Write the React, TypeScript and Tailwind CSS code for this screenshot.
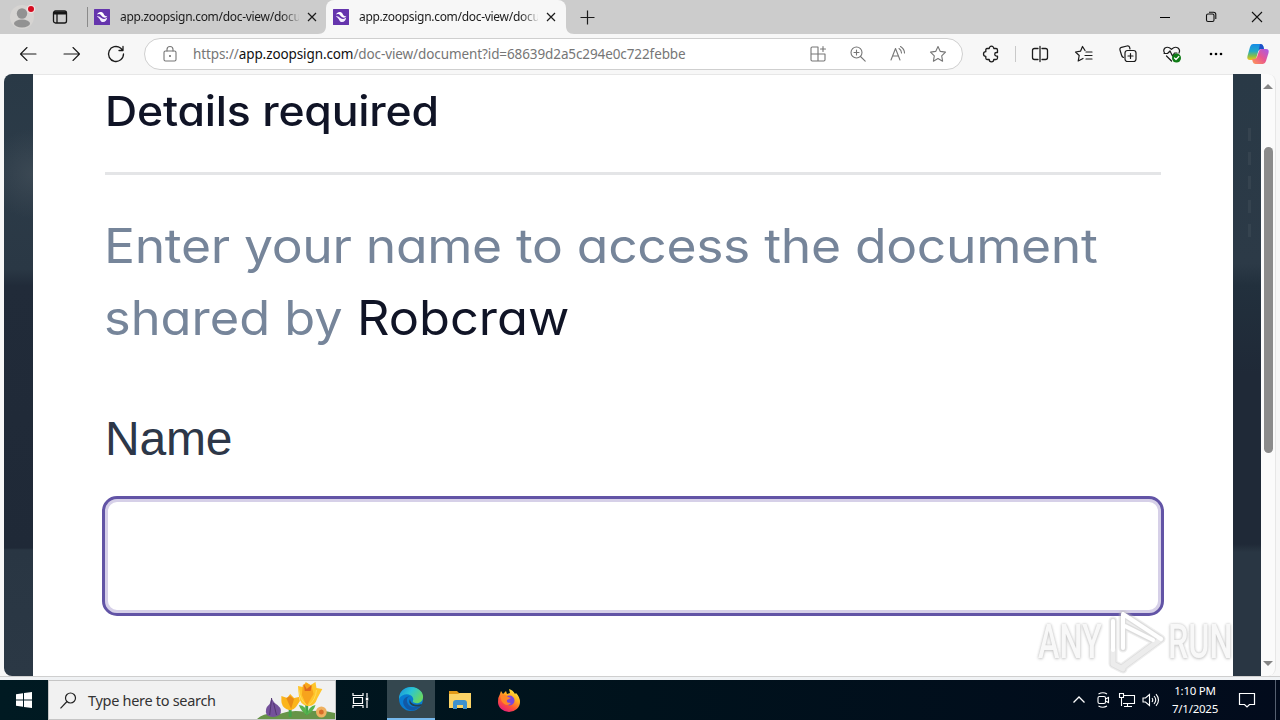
import type { ReactNode } from 'react';

const IconButton = ({ children }: { children: ReactNode }) => (
  <button type="button" className="flex h-8 w-11 shrink-0 items-center justify-center text-[#1b1b1b]">
    {children}
  </button>
);

const Icon = ({ children, size = 20, width = 1.1 }: { children: ReactNode; size?: number; width?: number }) => (
  <svg width={size} height={size} viewBox="0 0 20 20" fill="none" stroke="currentColor" strokeWidth={width} strokeLinecap="round" strokeLinejoin="round" className="shrink-0">
    {children}
  </svg>
);

const Favicon = () => (
  <svg width="16" height="16" viewBox="0 0 16 16" className="shrink-0">
    <rect width="16" height="16" rx="0.5" fill="#6535ad" />
    <path d="M3 5.500C4 3.200 6 2.500 8 3.200c2 .8 1.500 2.600 3 3.600.9.6 1.700.6 2.300.5-.6 1.300-2.300 1.700-4 1C7.300 7.500 7.500 6 6 5.300 5 4.800 4 5 3 5.500Z" fill="#fff" />
    <path d="M2.800 7.500c1.200-.3 2.300-.2 3.200.6 1.400 1.200 2.500 2 4.200 1.800 1.300-.1 2.400-.6 3-1.300-.2 2.800-2 4.600-4.300 4.500-2.400-.1-2.400-2.400-3.700-3.700-.8-.9-1.500-1.500-2.400-1.900Z" fill="#f3edff" />
  </svg>
);

const CloseIcon = () => (
  <svg width="10" height="10" viewBox="0 0 10 10" stroke="#1b1b1b" strokeWidth="1.2" className="shrink-0">
    <path d="M1 1l8 8M9 1L1 9" />
  </svg>
);

const Tab = ({ active = false }: { active?: boolean }) => (
  <div className={active ? 'relative flex h-[34px] w-[240px] items-center rounded-t-lg bg-[#f7f7f7] pl-[7px]' : 'flex h-[34px] w-[238px] items-center pl-[6px]'}>
    <Favicon />
    <span className="ml-[10px] w-[179px] overflow-hidden whitespace-nowrap text-[12px] tracking-[-0.3px] text-[#1b1b1b] [mask-image:linear-gradient(to_right,#000_90%,transparent_102%)]">
      app.zoopsign.com/doc-view/docu
    </span>
    <span className="ml-[8px] flex"><CloseIcon /></span>
    {active && (
      <>
        <svg width="8" height="8" className="absolute bottom-0 -left-2" fill="#f7f7f7"><path d="M8 0v8H0c5 0 8-3 8-8Z" /></svg>
        <svg width="8" height="8" className="absolute -right-2 bottom-0" fill="#f7f7f7"><path d="M0 0v8h8C3 8 0 5 0 0Z" /></svg>
      </>
    )}
  </div>
);

const TitleBar = () => (
  <div className="flex h-[34px] items-center bg-[#cccccc]">
    <svg width="28" height="28" viewBox="0 0 28 28" className="ml-2 shrink-0">
      <circle cx="14" cy="14" r="12" fill="#d6d4d2" />
      <circle cx="14" cy="10.500" r="5.200" fill="#929292" />
      <ellipse cx="14" cy="20.500" rx="8" ry="4" fill="#929292" />
      <circle cx="23" cy="6" r="4.300" fill="#f2dede" />
      <circle cx="23" cy="6" r="3" fill="#d50b20" />
    </svg>
    <svg width="16" height="16" viewBox="0 0 16 16" fill="none" stroke="#161616" strokeWidth="1.300" className="ml-4 shrink-0">
      <rect x="1.500" y="2" width="13" height="12" rx="2" />
      <path d="M2 4h12" strokeWidth="3" />
      <path d="M5 5v9" />
    </svg>
    <div className="ml-[19px] h-5 w-px bg-[#8a8a8a]" />
    <Tab />
    <Tab active />
    <svg width="15" height="15" viewBox="0 0 15 15" stroke="#1b1b1b" strokeWidth="1.200" className="ml-[14px]">
      <path d="M7.500.5v14M.5 7.500h14" />
    </svg>
    <div className="ml-auto flex items-center">
      <div className="flex w-[46px] justify-center"><div className="h-px w-[10px] bg-black" /></div>
      <div className="flex w-[46px] justify-center">
        <svg width="12" height="12" viewBox="0 0 12 12" fill="none" stroke="#111" strokeWidth="1.100">
          <rect x="1.500" y="3" width="7.500" height="7.500" rx="1.500" />
          <path d="M4 1.200h4.500q2.300 0 2.300 2.300V8" />
        </svg>
      </div>
      <div className="flex w-[46px] justify-center">
        <svg width="12" height="12" viewBox="0 0 12 12" stroke="#111" strokeWidth="1.100"><path d="M1 1l10 10M11 1L1 11" /></svg>
      </div>
    </div>
  </div>
);

const AddressBar = () => (
  <div className="ml-[6px] flex h-8 w-[819px] shrink-0 items-center rounded-full border border-[#cfcfcf] bg-white pr-1 pl-[15px] text-[#767676]">
    <Icon>
      <rect x="4" y="7" width="12" height="10" rx="1.500" />
      <path d="M7 7V5.500a3 3 0 0 1 6 0V7" />
      <circle cx="10" cy="12" r=".5" fill="currentColor" />
    </Icon>
    <span className="ml-[13px] text-[13.500px] whitespace-nowrap tracking-[-0.1px]">
      https://<span className="text-[#111]">app.zoopsign.com</span>/doc-view/document?id=68639d2a5c294e0c722febbe
    </span>
    <div className="ml-auto flex">
      <span className="flex w-10 justify-center">
        <Icon><path d="M10 3H4.200Q3 3 3 4.200v11.600Q3 17 4.200 17h11.600q1.200 0 1.200-1.200V10H3M10 3v14M15 2.500v5M12.500 5h5" /></Icon>
      </span>
      <span className="flex w-10 justify-center">
        <Icon><circle cx="8.500" cy="8.500" r="5.500" /><path d="M12.500 12.500l4.700 4.700M6 8.500h5M8.500 6v5" /></Icon>
      </span>
      <span className="flex w-10 justify-center">
        <Icon><path d="M3 16L7.500 4.500 12 16M4.500 12h6M11 4.500q2.500 1.500 2.500 4.500M12.500 2.500q4 2.500 4 6.500" /></Icon>
      </span>
      <span className="flex w-10 justify-center">
        <Icon><path d="M10 2.500l2.300 4.900 5.200.7-3.800 3.700.9 5.400-4.600-2.600-4.600 2.600.9-5.400-3.800-3.700 5.200-.7Z" /></Icon>
      </span>
    </div>
  </div>
);

const Toolbar = () => (
  <div className="flex h-10 items-center bg-[#f7f7f7] pl-[6px]">
    <IconButton><Icon><path d="M18 10H2.500M9 3.500L2.500 10 9 16.500" /></Icon></IconButton>
    <IconButton><Icon><path d="M2 10h15.500M11 3.500l6.500 6.500-6.500 6.500" /></Icon></IconButton>
    <IconButton><Icon width={1.300}><path d="M17.500 10A7.500 7.500 0 1 1 14.500 4l2 2M17 2.500V6.500h-4" /></Icon></IconButton>
    <AddressBar />
    <div className="ml-[6px]">
      <IconButton>
        <Icon width={1.300}>
          <path d="M6 4.500h2.200a2.300 2.300 0 0 1 4.600 0H15q1.500 0 1.500 1.500v2.500H15.500a1.800 1.800 0 0 0 0 3.600h1V14q0 1.500-1.500 1.500h-2.200a2.300 2.300 0 0 1-4.600 0H6q-1.200 0-1.200-1.500v-1.700a2.300 2.300 0 0 1 0-4.600V6Q4.800 4.500 6 4.500Z" />
        </Icon>
      </IconButton>
    </div>
    <div className="mx-[2px] h-4 w-px shrink-0 bg-[#c9c9c9]" />
    <IconButton>
      <Icon width={1.300}><path d="M8 4.500H4.500q-2 0-2 2v7q0 2 2 2H8M12 4.500h3.500q2 0 2 2v7q0 2-2 2H12M10 2.500v15" /></Icon>
    </IconButton>
    <IconButton>
      <Icon width={1.200}><path d="M11 6.500L8.500 2.500 6.500 7.200 1.500 8l3.700 3.500-1 5.500L9 14.500M12 8h6M11 11.500h7M12 15h6" /></Icon>
    </IconButton>
    <IconButton>
      <Icon width={1.200}>
        <path d="M5.500 13.500Q4 13 3.500 11L2 6q-.5-2 1.500-2.700L9 2q2-.4 2.600 1.300L12 5" />
        <rect x="7" y="6.500" width="11" height="11" rx="2.500" />
        <path d="M12.500 9.500v5M10 12h5" />
      </Icon>
    </IconButton>
    <IconButton>
      <Icon width={1.200}>
        <path d="M2.500 9Q.8 6 3 4q3-2 6.500 1.300Q13 2 16 4q2.500 2 1 5M4.500 12l5 5M2 9.500h3.500L8 7l2.500 5L12.500 9H15" />
        <circle cx="14.500" cy="14" r="4.500" fill="#0f7b16" stroke="none" />
        <path d="M12.500 14l1.500 1.500 2.800-3" stroke="#fff" />
      </Icon>
    </IconButton>
    <IconButton>
      <svg width="16" height="4" viewBox="0 0 16 4"><circle cx="3" cy="2" r="1.300" /><circle cx="8" cy="2" r="1.300" /><circle cx="13" cy="2" r="1.300" /></svg>
    </IconButton>
    <svg width="24" height="24" viewBox="0 0 24 24" className="ml-[8px] shrink-0">
      <defs>
        <linearGradient id="cpa" x1="0" y1="0" x2="0" y2="1">
          <stop offset="0" stopColor="#168ce8" />
          <stop offset=".45" stopColor="#22a9c8" />
          <stop offset=".75" stopColor="#86bf4a" />
          <stop offset="1" stopColor="#f3c51d" />
        </linearGradient>
        <linearGradient id="cpb" x1="1" y1="0" x2="0" y2="1">
          <stop offset="0" stopColor="#a45bee" />
          <stop offset=".5" stopColor="#e9568f" />
          <stop offset="1" stopColor="#ff9a55" />
        </linearGradient>
      </defs>
      <path d="M7 2h7.500q2 0 2.700 2L18 7h-3q-2 0-2.700 2l-2 7q-.6 2-2.600 2H4q-3.500 0-2.500-4L4 5q.8-3 3-3Z" fill="url(#cpa)" />
      <path d="M14 2q2.600 0 3.200 2L18 7h-3q-2 0-2.500 2Z" fill="#1e50c8" />
      <path d="M17 22H9.500q-2 0-2.700-2L6 17h2.300q2 0 2.700-2l2-6q.6-2 2.600-2H20q3.500 0 2.500 4L20 19q-.8 3-3 3Z" fill="url(#cpb)" />
    </svg>
  </div>
);

const Watermark = () => (
  <div className="pointer-events-none absolute top-[536px] left-[1034px] h-[64px] w-[200px] overflow-hidden font-['Roboto',sans-serif] text-[49px] leading-[64px] font-medium [text-shadow:0_0_3px_#c4c4c4,0_1px_4px_#ccc]">
    <span className="absolute left-[4px] origin-left scale-x-[0.66] text-[#f8f8f8]">ANY</span>
    <svg width="62" height="64" viewBox="0 0 62 64" className="absolute left-[70px] overflow-visible" fill="none" strokeLinejoin="round" strokeLinecap="round">
      <path d="M9 11v43l10 5M19 4v34M19 4l38 25-38 28M21 16l28 14" stroke="#bdbdbd" strokeWidth="9" opacity=".25" />
      <path d="M9 11v43l10 5M19 4v34M19 4l38 25-38 28M21 16l28 14" stroke="#bdbdbd" strokeWidth="6.500" opacity=".35" />
      <path d="M19 57l38-28M9 40v14l10 5" stroke="#ececec" strokeWidth="5" />
      <path d="M9 11v29M19 4v34M19 4l38 25M21 16l28 14" stroke="#fff" strokeWidth="4" />
    </svg>
    <span className="absolute left-[134px] origin-left scale-x-[0.66] text-[#f8f8f8]">RUN</span>
  </div>
);

const Page = () => (
  <div className="relative flex h-[602px] bg-[#f7f7f7] pr-1 pl-1">
    <div className="w-[29px] shrink-0 rounded-l-lg bg-[radial-gradient(circle_at_100%_100px,#45515b99_0px,transparent_45px),linear-gradient(to_bottom,#293946_0px,#2c3b48_90px,#2a3845_195px,#212b39_212px,#1f2937_474px,#293643_476px,#2b3845_602px)]" />
    <main className="w-[1200px] shrink-0 border-t border-[#e7e7e7] bg-white px-[72px] font-['Inter',sans-serif] [font-feature-settings:'cv11']">
      <h1 className="origin-left scale-x-[1.087] pt-[12px] text-[41px] leading-[48px] font-medium tracking-[-0.2px] whitespace-nowrap text-[#101426]">Details required</h1>
      <div className="mt-[37px] h-[3px] w-[1056px] bg-[#e4e5e7]" />
      <p className="mt-[35px] -ml-px text-[48px] leading-[72px] whitespace-nowrap text-[#76859a]">
        <span className="block origin-left scale-x-[1.075] tracking-[-0.3px]">Enter your name to access the document</span>
        <span className="block origin-left scale-x-[1.053]">
          shared by <span className="text-[#101426]">Robcraw</span>
        </span>
      </p>
      <label htmlFor="name" className="mt-[49px] block font-['Liberation_Sans',sans-serif] text-[48px] leading-[72px] tracking-[-0.2px] text-[#2d3748]">Name</label>
      <input
        id="name"
        type="text"
        className="mt-[21px] -ml-[3px] block h-[120px] w-[1062px] rounded-[15px] border-[3px] border-[#6254a6] bg-white px-10 text-[48px] shadow-[inset_0_0_0_3px_#d6d0e8] outline-none"
      />
    </main>
    <div className="flex w-7 shrink-0 justify-end bg-[linear-gradient(to_bottom,#293946_0px,#2c3a47_190px,#22303d_211px,#1f2937_300px,#1f2937_470px,#293643_478px,#293643_602px)] pr-[10px]">
      <div className="flex flex-col gap-[11px] pt-[54px]">
        {[0, 1, 2, 3, 4].map((i) => (
          <div key={i} className="h-[13px] w-[3px] bg-[#35434f]" />
        ))}
      </div>
    </div>
    <div className="flex w-[15px] shrink-0 flex-col items-center rounded-r-lg border-r border-[#e7e7e7] bg-[#fbfbfb] pt-[10px] pb-[10px]">
      <svg width="10" height="5" viewBox="0 0 10 5" fill="#858585"><path d="M0 5l5-5 5 5Z" /></svg>
      <div className="mt-[58px] h-[306px] w-[9px] rounded-full bg-[#8b8b8b]" />
      <svg width="10" height="5" viewBox="0 0 10 5" className="mt-auto" fill="#858585"><path d="M0 0h10L5 5Z" /></svg>
    </div>
    <Watermark />
  </div>
);

const Flowers = () => (
  <svg width="78" height="38" viewBox="0 0 80 38" preserveAspectRatio="none" className="ml-auto shrink-0">
    <path d="M0 38Q8 31 23 33 36 28 50 31 64 28 80 32V38Z" fill="#679448" />
    <path d="M34 36V25M51 34V24" stroke="#43a348" strokeWidth="3" />
    <path d="M51 34q-6-4-8-10 8 0 8 10Q53 25 60 24q-2 7-9 10Z" fill="#58b34e" />
    <path d="M15 17q2 5 6 7 6 5 2 10-7 4-13 0-3-6 3-11Z" fill="#74519b" />
    <path d="M15 17q-1 9-2 17M17 22l3 12" stroke="#51356f" fill="none" />
    <path d="M25 15l6 2 3-4 4 4 5-1 1 4-4 6q-4 5-10 2-5-3-5-8Z" fill="#fbb41c" />
    <path d="M30 17l4-2 4 3-3 10Z" fill="#e98b17" />
    <path d="M42 5l5 1 3-5 5 3 5-3 1 6 6 1-5 9q-3 9-10 8-8-1-9-10Z" fill="#ffc52a" />
    <path d="M47 4l4-2 5 3 2 8-7 12-5-11Z" fill="#f7a31c" />
    <path d="M48 3l3 5 5-4-1 6h-6Z" fill="#df681c" />
    <path d="M61 9q-1 10-8 15M43 9q1 10 8 15" stroke="#ffda54" fill="none" />
    <circle cx="66" cy="31" r="5.500" fill="#efb160" />
    <circle cx="66" cy="31" r="2.500" fill="#d86e28" />
  </svg>
);

const EdgeLogo = () => (
  <svg width="26" height="26" viewBox="0 0 26 26">
    <defs>
      <linearGradient id="edgeTop" x1="0" y1="0" x2="1" y2=".5">
        <stop offset="0" stopColor="#168bdb" />
        <stop offset=".5" stopColor="#2ac5d4" />
        <stop offset="1" stopColor="#66d765" />
      </linearGradient>
    </defs>
    <circle cx="13" cy="13" r="12" fill="#087bd1" />
    <path d="M1 13C1 5 7 1 13 1c8 0 13 6 12 11-1 6-8 6-10 4-1-1 1-2 0-4-2-5-11-5-14 1Z" fill="url(#edgeTop)" />
    <path d="M9 13c-1 6 6 11 14 6-3 5-9 7-14 4-6-5-5-12 3-13-2 1-3 2-3 3Z" fill="#1258a5" />
    <path d="M12 13c0 5 6 7 12 5l-1 2C17 22 9 19 12 13Z" fill="#263f4d" />
  </svg>
);

const FolderLogo = () => (
  <svg width="22" height="20" viewBox="0 0 22 20">
    <path d="M0 1h8l2 2h12v5H0Z" fill="#e29a18" />
    <path d="M0 4h9l2-1h11v15H0Z" fill="#fbd366" />
    <path d="M4 19v-6q0-3 3-3h8q3 0 3 3v6h-4v-4H8v4Z" fill="#3e91cf" />
  </svg>
);

const FirefoxLogo = () => (
  <svg width="24" height="24" viewBox="0 0 24 24">
    <defs>
      <linearGradient id="fox" x1=".8" y1="0" x2=".2" y2="1">
        <stop offset="0" stopColor="#fff044" />
        <stop offset=".35" stopColor="#ffad20" />
        <stop offset=".65" stopColor="#ff5534" />
        <stop offset="1" stopColor="#e31587" />
      </linearGradient>
    </defs>
    <path d="M3 6l1-3 2 3 3-3 1 3 3-1-1-4q4 1 6 5l1-1q4 4 4 9a11 10 0 0 1-22 0Q1 9 3 6Z" fill="url(#fox)" />
    <circle cx="12.500" cy="12.500" r="5" fill="#7947dc" />
    <path d="M4 7q5-1 7 2l3 1-4 2q-1 3 4 3-4 4-8 0Q3 12 4 7Z" fill="#ff8626" />
  </svg>
);

const TrayIcon = ({ children }: { children: ReactNode }) => (
  <svg width="18" height="18" viewBox="0 0 18 18" fill="none" stroke="#fff" strokeWidth="1.100" className="mr-[6px] shrink-0">
    {children}
  </svg>
);

const Taskbar = () => (
  <div className="flex h-10 items-center bg-[linear-gradient(to_right,#001a22,#00121c_50%,#020b1c)]">
    <div className="flex w-12 shrink-0 justify-center">
      <svg width="16" height="16" viewBox="0 0 16 16" fill="#fff"><path d="M0 2.300L7 1.300v6.200H0ZM8 1.100L16 0v7.500H8ZM0 8.500h7v6.200l-7-1ZM8 8.500h8V16l-8-1.100Z" /></svg>
    </div>
    <div className="flex h-10 w-[288px] shrink-0 items-center border border-[#c5c5c5] bg-[#f1f1f1] pl-[11px]">
      <svg width="17" height="17" viewBox="0 0 17 17" fill="none" stroke="#222" strokeWidth="1.200" className="shrink-0"><circle cx="10.500" cy="6" r="5" /><path d="M7 9.500L.5 16.300" /></svg>
      <span className="ml-[11px] pt-[2px] text-[14.500px] tracking-[-0.3px] whitespace-nowrap text-[#333]">Type here to search</span>
      <Flowers />
    </div>
    <div className="flex w-12 shrink-0 justify-center">
      <svg width="17" height="17" viewBox="0 0 17 17" fill="none" stroke="#fff" strokeWidth="1.200"><path d="M1 1v2.500h10V1M1 16v-2.500h10V16M1.500 5.500h9v6h-9ZM15 1v4M15 9v7" /><path d="M13.800 5.500h2.500v3h-2.500Z" fill="#fff" stroke="none" /></svg>
    </div>
    <div className="ml-[3px] flex h-10 w-12 shrink-0 items-center justify-center border-b-2 border-[#76b9ed] bg-[#34474f]"><EdgeLogo /></div>
    <div className="ml-px flex w-12 shrink-0 justify-center"><FolderLogo /></div>
    <div className="ml-px flex w-12 shrink-0 justify-center"><FirefoxLogo /></div>
    <div className="ml-auto flex items-center">
      <TrayIcon><path d="M3.500 11.500L9 6l5.500 5.500" strokeWidth="1.300" /></TrayIcon>
      <TrayIcon><rect x="4" y="5.500" width="7.500" height="7" rx="1.500" /><path d="M11.500 8l3-1.500v5L11.500 10M4.500 3Q9 .5 13 3M4.500 15Q9 17.500 13 15" /></TrayIcon>
      <TrayIcon><path d="M6 4.500h10.500v8H5M9.500 12.500v3M6 15.500h8M1.500 2.500h4v4h-4ZM3.500 6.500v8.500" /></TrayIcon>
      <TrayIcon><path d="M1 7h2.500l4-3.500v11L3.500 11H1ZM10 7q1.500 2 0 4M12 5q3.500 4 0 8M14 3.200q5 5.800 0 11.600" /></TrayIcon>
    </div>
    <div className="-ml-1 w-[66px] shrink-0 text-center text-[11.500px] leading-[18px] tracking-[-0.25px] whitespace-nowrap text-white">
      <div>1:10 PM</div>
      <div>7/1/2025</div>
    </div>
    <svg width="18" height="18" viewBox="0 0 18 18" fill="none" stroke="#fff" strokeWidth="1.200" className="ml-[10px] shrink-0">
      <path d="M1.500 2.500h15v11h-5L9 16l-2.500-2.500h-5Z" />
    </svg>
    <div className="mr-1 ml-[19px] h-10 w-px bg-[#566070]" />
  </div>
);

const App = () => {
  return (
    <div className="h-[720px] w-[1280px] overflow-hidden bg-[#f7f7f7] font-['Noto_Sans',sans-serif]">
      <TitleBar />
      <Toolbar />
      <Page />
      <div className="h-1 border-t border-[#cfcfcf] bg-[#f0f2f4]" />
      <Taskbar />
    </div>
  );
};

export default App;
